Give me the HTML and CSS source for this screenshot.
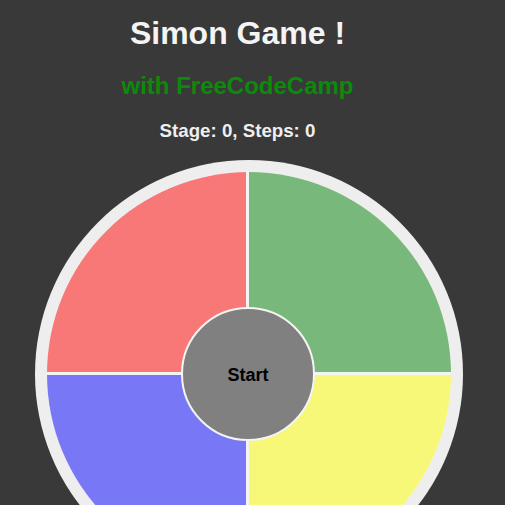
FILE: index.html
```html
<!DOCTYPE html>
<html>
<head>
<meta charset="utf-8">
<link rel="stylesheet" href="styles.css">
</head>
<body>
<header class="header">
  <h1 class="title">Simon Game !</h1>
  <h2 class="subtitle">with FreeCodeCamp</h2>
  <h3 class="status">Stage: 0, Steps: 0</h3>
</header>
<main class="board">
  <div class="ring">
    <div class="pads">
      <div class="pad pad-red"></div>
      <div class="pad pad-green"></div>
      <div class="pad pad-blue"></div>
      <div class="pad pad-yellow"></div>
      <button class="start">Start</button>
    </div>
  </div>
</main>
</body>
</html>
```

FILE: styles.css
```css
html, body {
  margin: 0;
  padding: 0;
  background: #393939;
  overflow: hidden;
  height: 505px;
}
body {
  font-family: "Liberation Sans", Arial, sans-serif;
}
.header {
  padding-right: 30px;
  text-align: center;
  padding-top: 15px;
}
.title {
  margin: 0;
  font-size: 32px;
  line-height: 36px;
  font-weight: bold;
  color: #f4f4f4;
}
.subtitle {
  margin: 21px 0 0;
  font-size: 24px;
  line-height: 28px;
  font-weight: bold;
  color: #0b8a0b;
}
.status {
  margin: 20px 0 0;
  font-size: 18.72px;
  line-height: 22px;
  font-weight: bold;
  color: #efefef;
}
.board {
  padding-left: 35px;
  padding-top: 18px;
}
.ring {
  width: 404px;
  height: 404px;
  padding: 12px;
  border-radius: 50%;
  background: #eeeeee;
}
.pads {
  position: relative;
  width: 404px;
  height: 404px;
  border-radius: 50%;
  overflow: hidden;
  display: grid;
  grid-template-columns: 199px 202px;
  grid-template-rows: 200px 201px;
  gap: 3px;
  background: #f4f4f4;
}
.pad-red { background: #f87878; }
.pad-green { background: #78b87a; }
.pad-blue { background: #7878f7; }
.pad-yellow { background: #f7f778; }
.start {
  position: absolute;
  left: 134px;
  top: 135px;
  width: 134px;
  height: 134px;
  border-radius: 50%;
  border: 2px solid #f4f4f4;
  background: #808080;
  color: #000;
  font-family: "Liberation Sans", Arial, sans-serif;
  font-weight: bold;
  font-size: 18px;
  padding: 0;
  padding-top: 2px;
  cursor: pointer;
}
```
